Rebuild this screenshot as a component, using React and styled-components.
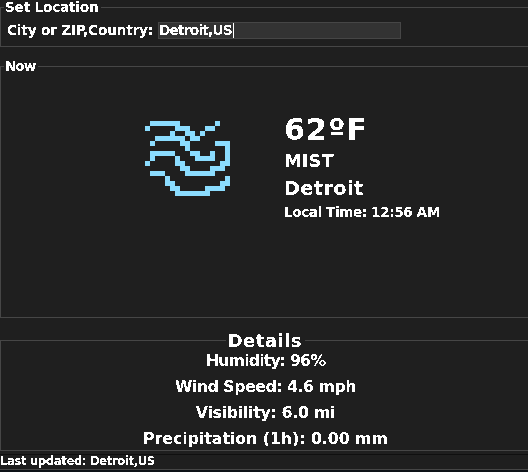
import React from "react";
import styled, { createGlobalStyle } from "styled-components";

const GlobalStyle = createGlobalStyle`
  * { box-sizing: border-box; }
  html, body { margin: 0; height: 100%; overflow: hidden; background: #1f1f1f; }
  body { color: #fff; font-family: "DejaVu Sans", sans-serif; font-weight: 700; }
`;

const Crisp = styled.span`
  display: block;
  filter: url(#crisp);
`;

const Window = styled.main`
  display: flex;
  flex-direction: column;
  width: 531px;
  height: 472px;
  background: #1f1f1f;
`;

const Group = styled.fieldset`
  flex: none;
  min-width: 0;
  height: ${(p) => p.$height}px;
  margin: ${(p) => p.$gap || 0}px 0 0;
  padding: 0 0 0 3px;
  border: 1px solid #464646;
`;

const DetailsGroup = styled(Group)`
  padding: 0;
`;

const Legend = styled.legend`
  height: 15px;
  padding: 0 3px 0 1px;
  line-height: 15px;
  font-size: 13.7px;
  letter-spacing: ${(p) => p.$spacing}px;
  white-space: nowrap;
`;

const CenterLegend = styled(Legend)`
  height: 13px;
  margin: 0 auto;
  padding: 0 3px 0 2px;
  line-height: 13px;
  font-size: 17.8px;
`;

const LocationRow = styled.label`
  display: flex;
  align-items: center;
  height: 17px;
  margin: 7px 0 0 3px;
  font-size: 13.7px;
  letter-spacing: -0.21px;
  line-height: 15px;
  white-space: nowrap;
`;

const LocationLabel = styled.span`
  flex: none;
  width: 151px;
`;

const Field = styled.span`
  display: flex;
  align-items: center;
  width: 243px;
  height: 17px;
  border: 1px solid #464646;
  background: #333;
  letter-spacing: -0.78px;
`;

const Caret = styled.i`
  width: 1px;
  height: 15px;
  margin-left: 1px;
  background: #fff;
`;

const Weather = styled.div`
  display: flex;
  align-items: flex-start;
  padding: 39px 0 0 141px;
`;

const Icon = styled.svg`
  flex: none;
  width: 85px;
  height: 75px;
  margin-top: 8px;
`;

const Readings = styled.div`
  margin-left: 54px;
`;

const Reading = styled.div`
  height: ${(p) => p.$height}px;
  line-height: ${(p) => p.$height}px;
  font-size: ${(p) => p.$size}px;
  letter-spacing: ${(p) => p.$spacing}px;
  white-space: nowrap;
`;

const DetailRows = styled.div`
  padding-top: 1px;
`;

const DetailRow = styled.div`
  height: 26px;
  line-height: 26px;
  font-size: 15.8px;
  letter-spacing: ${(p) => p.$spacing}px;
  text-align: center;
  white-space: nowrap;
`;

const StatusBar = styled.footer`
  flex: none;
  height: 16px;
  margin-top: 3px;
  border-top: 1px solid #101010;
  border-bottom: 1px solid #464646;
  line-height: 13px;
  font-size: 11.7px;
  letter-spacing: -0.4px;
  white-space: nowrap;
`;

const BottomEdge = styled.div`
  flex: 1;
  background: #0d1117;
`;

// Each run is [row, first column, length] on the icon's 17 x 15 grid.
const mist = [
  [0, 1, 6], [0, 14, 1],
  [1, 0, 1], [1, 6, 3], [1, 12, 2],
  [2, 5, 1], [2, 8, 2], [2, 11, 1],
  [3, 2, 6], [3, 9, 2],
  [4, 1, 1], [4, 7, 2], [4, 14, 3],
  [5, 8, 1], [5, 16, 1],
  [6, 1, 5], [6, 9, 2], [6, 13, 1], [6, 16, 1],
  [7, 1, 1], [7, 6, 1], [7, 10, 4], [7, 16, 1],
  [8, 0, 1], [8, 6, 2], [8, 15, 2],
  [9, 7, 2], [9, 13, 3],
  [10, 1, 3], [10, 8, 6],
  [11, 4, 1], [11, 16, 1],
  [12, 4, 2], [12, 15, 2],
  [13, 5, 2], [13, 12, 4],
  [14, 6, 7],
];

const details = [
  ["Humidity: 96%", -0.87],
  ["Wind Speed: 4.6 mph", -0.5],
  ["Visibility: 6.0 mi", -0.3],
  ["Precipitation (1h): 0.00 mm", -0.05],
];

function MistIcon() {
  return (
    <Icon viewBox="0 0 17 15" shapeRendering="crispEdges" fill="#8bdcfe">
      {mist.map(([y, x, w]) => (
        <rect key={`${y}-${x}`} x={x} y={y} width={w} height="1" />
      ))}
    </Icon>
  );
}

const FilterDefs = styled.svg`
  display: block;
  width: 0;
  height: 0;
`;

// Hardens glyph edges so the type has a bitmap look.
function CrispFilter() {
  return (
    <FilterDefs aria-hidden="true">
      <filter id="crisp" x="-5%" y="-20%" width="110%" height="140%">
        <feComponentTransfer>
          <feFuncA type="discrete" tableValues="0 1" />
        </feComponentTransfer>
      </filter>
    </FilterDefs>
  );
}

export default function App() {
  return (
    <>
      <GlobalStyle />
      <CrispFilter />
      <Window>
        <Group $height={47}>
          <Legend $spacing={-0.24}><Crisp>Set Location</Crisp></Legend>
          <LocationRow>
            <LocationLabel><Crisp>City or ZIP,Country:</Crisp></LocationLabel>
            <Field><Crisp>Detroit,US</Crisp><Caret /></Field>
          </LocationRow>
        </Group>
        <Group $height={259} $gap={12}>
          <Legend $spacing={-1.1}><Crisp>Now</Crisp></Legend>
          <Weather>
            <MistIcon />
            <Readings>
              <Reading $height={33} $size={30.2} $spacing={1.1}><Crisp>62ºF</Crisp></Reading>
              <Reading $height={30} $size={17.8} $spacing={0.1}><Crisp>MIST</Crisp></Reading>
              <Reading $height={26} $size={19.2} $spacing={0.44}><Crisp>Detroit</Crisp></Reading>
              <Reading $height={20} $size={13.7} $spacing={-0.47}><Crisp>Local Time: 12:56 AM</Crisp></Reading>
            </Readings>
          </Weather>
        </Group>
        <DetailsGroup $height={117} $gap={16}>
          <CenterLegend $spacing={0.65}><Crisp>Details</Crisp></CenterLegend>
          <DetailRows>
            {details.map(([text, spacing]) => (
              <DetailRow key={text} $spacing={spacing}><Crisp>{text}</Crisp></DetailRow>
            ))}
          </DetailRows>
        </DetailsGroup>
        <StatusBar><Crisp>Last updated: Detroit,US</Crisp></StatusBar>
        <BottomEdge />
      </Window>
    </>
  );
}
